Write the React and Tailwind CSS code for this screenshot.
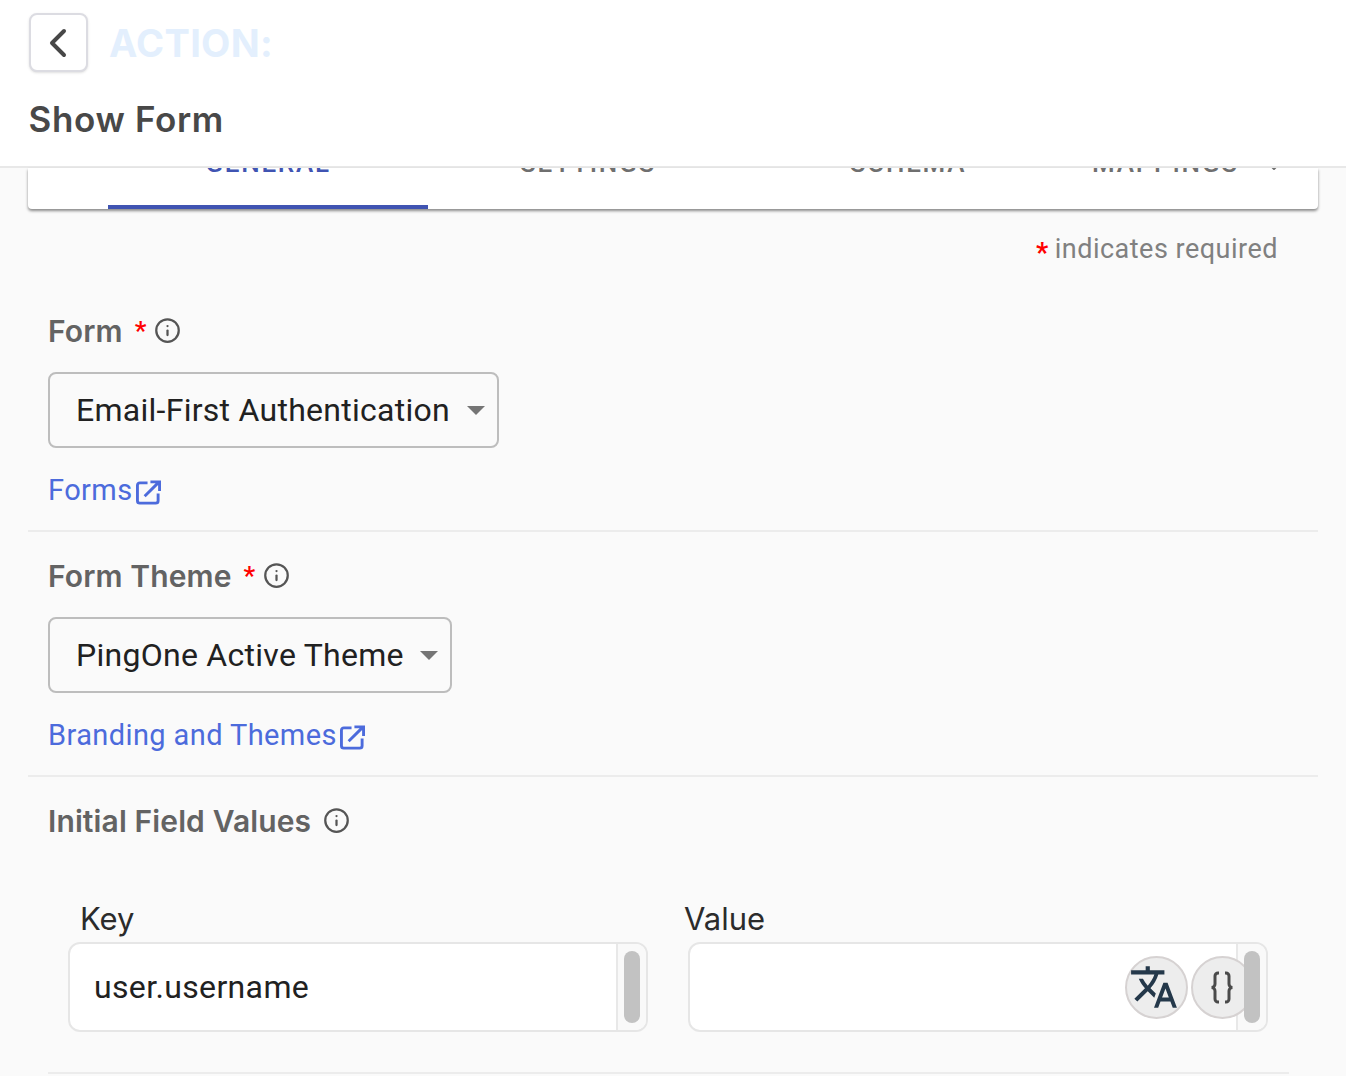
import React from 'react';
import { ChevronDown, ChevronLeft, Info } from 'lucide-react';
import { MdTranslate } from 'react-icons/md';

const Caret = () => (
  <svg width="18" height="9" viewBox="0 0 18 9" className="shrink-0">
    <path d="M0 0h18L9 9z" fill="#757575" />
  </svg>
);

const ExternalIcon = () => (
  <svg width="25" height="25" viewBox="0 0 26 26" fill="none" stroke="currentColor" strokeWidth="3" className="ml-[3px] mt-[3px] shrink-0">
    <path d="M12 3H4a2.5 2.5 0 0 0-2.5 2.5v16A2.5 2.5 0 0 0 4 24h16.500a2.500 2.500 0 0 0 2.500-2.500V14" />
    <path d="M9 17 23 3M15 2h9.500v9.500" />
  </svg>
);

const FieldLabel = ({ children, required }) => (
  <div className="flex items-center h-8 pt-px text-[30px] leading-8 tracking-[0.12px] font-semibold text-[#636363] font-['Inter',sans-serif]">
    <span>{children}</span>
    {required && <span className="ml-3 text-[26px] leading-8 text-[#f00] font-['Roboto',sans-serif]">*</span>}
    <Info className={required ? 'ml-2 text-[#555555]' : 'ml-3 text-[#555555]'} size={27} strokeWidth={2} />
  </div>
);

const SelectBox = ({ value, width }) => (
  <div className={`mt-[26px] h-[76px] ${width} flex items-center justify-between pl-[26px] pr-[12px] border-2 border-[#bdbdbd] rounded-lg text-[32px] tracking-[0.27px] text-[#212121] font-['Roboto',sans-serif]`}>
    <span className="whitespace-nowrap">{value}</span>
    <Caret />
  </div>
);

const DocLink = ({ children }) => (
  <div className="mt-[27px] h-8 flex items-center text-[29px] tracking-[0.4px] text-[#4c6bdc] font-['Roboto',sans-serif]">
    <span>{children}</span>
    <ExternalIcon />
  </div>
);

const ScrollInput = ({ label, labelClass, value, children }) => (
  <div className="w-[579.5px]">
    <div className={`${labelClass} h-8 pt-[2px] flex items-center text-[31px] text-[#2b2b2b] font-['Inter',sans-serif]`}>{label}</div>
    <div className="mt-[8px] h-[90px] flex border-2 border-[#e6e6e6] rounded-xl bg-white overflow-hidden">
      <div className="relative z-10 flex-1 flex items-center justify-end pl-6 text-[32px] tracking-[0.35px] text-[#212121] font-['Roboto',sans-serif]">
        {value && <span className="flex-1">{value}</span>}
        {children}
      </div>
      <div className="w-[30px] bg-[#f9f9f9] border-l-2 border-[#e8e8e8] flex items-center justify-center">
        <div className="relative z-20 w-4 h-[72px] rounded-full bg-[#c2c2c2]" />
      </div>
    </div>
  </div>
);

const IconCircle = ({ className, children }) => (
  <div className={`w-[63px] h-[63px] rounded-full bg-[#ededed] border-2 border-[#d6d2d2] flex items-center justify-center ${className}`}>
    {children}
  </div>
);

const tabs = [
  { name: 'GENERAL', active: true },
  { name: 'SETTINGS' },
  { name: 'SCHEMA' },
];

export default function App() {
  return (
    <div className="h-[1076px] w-[1346px] overflow-hidden bg-[#fafafa] font-['Roboto',sans-serif]">
      <header className="h-[168px] bg-white border-b-2 border-[#e8e8e8] px-[28.5px] pt-[13px]">
        <div className="flex items-center">
          <button className="w-[59px] h-[59px] flex items-center justify-center bg-white border-2 border-[#dcdce2] rounded-lg shadow-sm text-[#474747]">
            <ChevronLeft size={48} strokeWidth={2} />
          </button>
          <span className="ml-[21.500px] pt-[2px] text-[38px] font-bold tracking-[0.3px] text-[#e3effd] font-['Inter',sans-serif]">ACTION:</span>
        </div>
        <h1 className="mt-[27px] text-[35px] leading-10 tracking-[0.65px] font-semibold text-[#484848] font-['Inter',sans-serif]">Show Form</h1>
      </header>

      <div className="mx-7 h-[41px] bg-white shadow-[0_2px_3px_rgba(0,0,0,0.45)] flex pl-20 rounded-b-sm">
        {tabs.map((t) => (
          <div key={t.name} className={`w-80 h-[41px] overflow-hidden flex justify-center ${t.active ? 'border-b-4 border-[#4054b2] text-[#4054b2]' : 'text-[#6f6f6f]'}`}>
            <span className="mt-[-19px] leading-[28px] text-[26px] font-medium tracking-[1.75px]">{t.name}</span>
          </div>
        ))}
        <div className="flex-1 h-[41px] overflow-hidden flex text-[#6f6f6f]">
          <span className="ml-6 mt-[-19px] leading-[28px] text-[26px] font-medium tracking-[1.75px]">MAPPINGS</span>
          <ChevronDown size={24} className="ml-[23px] mt-[-14px]" />
        </div>
      </div>

      <div className="mt-[24px] pr-[68px] flex justify-end items-center h-8 text-[27px] tracking-[0.5px] text-[#808080]">
        <span className="text-[#f00] font-bold mr-[6px] translate-y-1">*</span>
        <span>indicates required</span>
      </div>

      <section className="mx-7 mt-[49px] px-5 pb-[23px] border-b-2 border-[#ececec]">
        <FieldLabel required>Form</FieldLabel>
        <SelectBox value="Email-First Authentication" width="w-[451px]" />
        <DocLink>Forms</DocLink>
      </section>

      <section className="mx-7 pt-[27px] px-5 pb-[23px] border-b-2 border-[#ececec]">
        <FieldLabel required>Form Theme</FieldLabel>
        <SelectBox value="PingOne Active Theme" width="w-[404px]" />
        <DocLink>Branding and Themes</DocLink>
      </section>

      <section className="mx-7 pt-[27px] px-5">
        <FieldLabel>Initial Field Values</FieldLabel>
        <div className="mt-[66px] ml-5 flex gap-[40.500px]">
          <ScrollInput label="Key" labelClass="pl-3" value="user.username" />
          <ScrollInput label="Value" labelClass="-ml-1">
            <div className="flex items-center gap-[3px] -mr-[18px]">
              <IconCircle className="pr-1"><MdTranslate size={50} className="text-[#24384a]" /></IconCircle>
              <IconCircle>
                <svg width="24" height="33" viewBox="0 0 24 33" fill="none" stroke="#4a4a4a" strokeWidth="3">
                  <path d="M9 2H8a3 3 0 0 0-3 3v8a3.500 3.500 0 0 1-3.500 3.500A3.500 3.500 0 0 1 5 20v8a3 3 0 0 0 3 3h1" />
                  <path d="M15 2h1a3 3 0 0 1 3 3v8a3.500 3.500 0 0 0 3.500 3.500A3.500 3.500 0 0 0 19 20v8a3 3 0 0 1-3 3h-1" />
                </svg>
              </IconCircle>
            </div>
          </ScrollInput>
        </div>
        <div className="mt-[40px] mr-[9px] border-b-2 border-[#ececec]" />
      </section>
    </div>
  );
}
